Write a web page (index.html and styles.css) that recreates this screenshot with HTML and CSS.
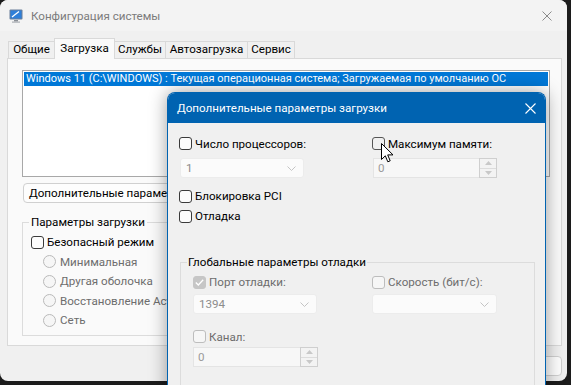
FILE: index.html
```html
<!DOCTYPE html>
<html lang="ru">
<head>
    <meta charset="UTF-8">
    <title>Конфигурация системы</title>
    <link rel="stylesheet" href="styles.css">
</head>
<body>
    <div class="desktop">
        <!-- main msconfig window -->
        <div class="window main-window">
            <div class="titlebar">
                <svg class="app-icon" width="14" height="14" viewBox="0 0 14 14">
                    <rect x="0.5" y="0.5" width="13" height="10" rx="1" fill="#6b7f9a"/>
                    <rect x="1.5" y="1.5" width="11" height="8" fill="#2f7fd8"/>
                    <path d="M3 8 L10 2.5" stroke="#ffffff" stroke-width="1.3"/>
                    <rect x="5" y="11" width="4" height="1.5" fill="#8a8f96"/>
                    <rect x="3" y="12.5" width="8" height="1.2" fill="#a9adb3"/>
                </svg>
                <span class="title">Конфигурация системы</span>
                <span class="close">
                    <svg width="10" height="10" viewBox="0 0 10 10"><path d="M0.5 0.5 L9.5 9.5 M9.5 0.5 L0.5 9.5" stroke="#8a8a8a" stroke-width="1"/></svg>
                </span>
            </div>
            <div class="client">
                <div class="tabs">
                    <div class="tab tab-general">Общие</div>
                    <div class="tab active">Загрузка</div>
                    <div class="tab tab-services">Службы</div>
                    <div class="tab tab-startup">Автозагрузка</div>
                    <div class="tab tab-tools">Сервис</div>
                </div>
                <div class="tab-panel">
                    <div class="os-list">
                        <div class="os-item selected">Windows 11 (C:\WINDOWS) : Текущая операционная система; Загружаемая по умолчанию ОС</div>
                    </div>
                    <div class="btn-row">
                        <button class="btn">Дополнительные параметры...</button>
                    </div>
                    <fieldset class="group boot-group">
                        <legend>Параметры загрузки</legend>
                        <label class="check"><span class="box"></span>Безопасный режим</label>
                        <label class="radio"><span class="dot"></span>Минимальная</label>
                        <label class="radio"><span class="dot"></span>Другая оболочка</label>
                        <label class="radio"><span class="dot"></span>Восстановление Active Directory</label>
                        <label class="radio"><span class="dot"></span>Сеть</label>
                    </fieldset>
                </div>
                <div class="footer">
                    <button class="btn">Отмена</button>
                </div>
            </div>
        </div>

        <!-- advanced boot options dialog -->
        <div class="window dialog">
            <div class="dialog-title">
                <span class="title">Дополнительные параметры загрузки</span>
                <span class="close">
                    <svg width="11" height="11" viewBox="0 0 11 11"><path d="M0.5 0.5 L10.5 10.5 M10.5 0.5 L0.5 10.5" stroke="#ffffff" stroke-width="1.1"/></svg>
                </span>
            </div>
            <div class="dialog-body">
                <div class="two-col top-cols">
                    <div class="col">
                        <label class="check"><span class="box"></span>Число процессоров:</label>
                        <div class="combo"><span>1</span><svg width="9" height="5" viewBox="0 0 9 5"><path d="M0.5 0.5 L4.5 4.5 L8.5 0.5" fill="none" stroke="#c4c4c4"/></svg></div>
                    </div>
                    <div class="col">
                        <label class="check"><span class="box hover"></span>Максимум памяти:</label>
                        <div class="spin">
                            <span class="spin-field">0</span>
                            <span class="spin-btns">
                                <span class="spin-btn"><svg width="7" height="4" viewBox="0 0 7 4"><path d="M0 4 L3.5 0 L7 4Z" fill="#c8c8c8"/></svg></span>
                                <span class="spin-btn"><svg width="7" height="4" viewBox="0 0 7 4"><path d="M0 0 L3.5 4 L7 0Z" fill="#c8c8c8"/></svg></span>
                            </span>
                        </div>
                    </div>
                </div>
                <label class="check pci"><span class="box"></span>Блокировка PCI</label>
                <label class="check"><span class="box"></span>Отладка</label>

                <fieldset class="group debug-group">
                    <legend>Глобальные параметры отладки</legend>
                    <div class="two-col debug-cols">
                        <div class="col">
                            <label class="check disabled"><span class="box checked">
                                <svg width="9" height="7" viewBox="0 0 9 7"><path d="M0.8 3.5 L3.3 6 L8.2 0.8" fill="none" stroke="#ffffff" stroke-width="1.3"/></svg>
                            </span>Порт отладки:</label>
                            <div class="combo"><span>1394</span><svg width="9" height="5" viewBox="0 0 9 5"><path d="M0.5 0.5 L4.5 4.5 L8.5 0.5" fill="none" stroke="#c4c4c4"/></svg></div>
                        </div>
                        <div class="col">
                            <label class="check disabled"><span class="box"></span>Скорость (бит/с):</label>
                            <div class="combo"><span></span><svg width="9" height="5" viewBox="0 0 9 5"><path d="M0.5 0.5 L4.5 4.5 L8.5 0.5" fill="none" stroke="#c4c4c4"/></svg></div>
                        </div>
                    </div>
                    <label class="check disabled channel"><span class="box"></span>Канал:</label>
                    <div class="spin narrow">
                        <span class="spin-field">0</span>
                        <span class="spin-btns">
                            <span class="spin-btn"><svg width="7" height="4" viewBox="0 0 7 4"><path d="M0 4 L3.5 0 L7 4Z" fill="#c8c8c8"/></svg></span>
                            <span class="spin-btn"><svg width="7" height="4" viewBox="0 0 7 4"><path d="M0 0 L3.5 4 L7 0Z" fill="#c8c8c8"/></svg></span>
                        </span>
                    </div>
                    <div class="usb-label">Имя целевого USB:</div>
                </fieldset>
            </div>
        </div>

        <svg class="cursor" width="13" height="21" viewBox="0 0 13 21">
            <path d="M0.5 0.5 L0.5 16.5 L4.3 12.8 L6.8 18.8 L9.2 17.8 L6.7 11.9 L12 11.9 Z" fill="#ffffff" stroke="#000000" stroke-width="1" stroke-linejoin="round"/>
        </svg>
    </div>
</body>
</html>
```

FILE: styles.css
```css
* {
    box-sizing: border-box;
}

body {
    margin: 0;
    background: #1c1c1c;
    font-family: Roboto, "Noto Sans", sans-serif;
    font-size: 11.6px;
    color: #000000;
}

.desktop {
    position: relative;
    width: 571px;
    height: 385px;
    overflow: hidden;
}

.window {
    position: absolute;
}

/* main window */
.main-window {
    left: 0;
    top: 0;
    width: 567px;
    height: 381px;
    background: #f0f0f0;
    border-radius: 8px;
    overflow: hidden;
    display: flex;
    flex-direction: column;
}

.titlebar {
    height: 31px;
    background: #f3f3f3;
    display: flex;
    align-items: center;
    padding-left: 9px;
}

.app-icon {
    flex: none;
}

.titlebar .title {
    margin-left: 8px;
    color: #7b7b7b;
    flex: 1;
}

.titlebar .close {
    width: 40px;
    height: 31px;
    display: flex;
    align-items: center;
    justify-content: center;
}

.client {
    flex: 1;
    padding: 7px 5px 0 7px;
}

.tabs {
    display: flex;
    align-items: flex-end;
    height: 20px;
    padding-left: 1px;
}

.tab {
    height: 17px;
    line-height: 15px;
    padding: 0 3px;
    text-align: center;
    border: 1px solid #d9d9d9;
    border-bottom: none;
    margin-right: -1px;
    background: #f0f0f0;
    white-space: nowrap;
}

.tab-general { width: 47px; }
.tab-services { width: 52px; }
.tab-startup { width: 83px; }
.tab-tools { width: 48px; }

.tab.active {
    width: 61px;
    height: 21px;
    line-height: 18px;
    margin-bottom: -1px;
    background: #fafafa;
    position: relative;
    z-index: 1;
}

.tab-panel {
    height: 288px;
    border: 1px solid #d9d9d9;
    background: #fafafa;
    padding: 11px 11px 0 14px;
}

.os-list {
    height: 107px;
    border: 1px solid #a8a8a8;
    background: #ffffff;
    padding: 1px;
}

.os-item {
    height: 14px;
    line-height: 13px;
    padding-left: 2px;
    font-size: 11px;
    white-space: nowrap;
    overflow: hidden;
}

.os-item.selected {
    background: #0078d7;
    color: #ffffff;
}

.btn-row {
    margin-top: 6px;
    padding-left: 1px;
}

.btn {
    height: 20px;
    padding: 0 5px;
    border: 1px solid #d0d0d0;
    border-radius: 4px;
    background: #fdfdfd;
    font-family: inherit;
    font-size: 11.6px;
    color: #000000;
}

.group {
    margin: 0;
    border: 1px solid #dcdcdc;
    padding: 2px 8px 5px 8px;
}

.group legend {
    padding: 0 2px;
    margin-left: -2px;
    line-height: 16px;
}

.boot-group {
    margin-top: 11px;
    width: 300px;
}

.check, .radio {
    display: flex;
    align-items: center;
    gap: 3px;
    height: 20px;
    white-space: nowrap;
}

.radio {
    height: 19.5px;
    padding-left: 12px;
    gap: 4px;
    color: #6d6d6d;
}

.box {
    width: 13px;
    height: 13px;
    flex: none;
    border: 1px solid #3a3a3a;
    border-radius: 3px;
    background: #fcfcfc;
    display: flex;
    align-items: center;
    justify-content: center;
}

.box.hover {
    background: #f0f0f0;
    border-color: #555555;
}

.dot {
    width: 13px;
    height: 13px;
    flex: none;
    border: 1px solid #bababa;
    border-radius: 50%;
    background: #f6f6f6;
}

.check.disabled {
    color: #6d6d6d;
}

.check.disabled .box {
    border-color: #bdbdbd;
    background: #f6f6f6;
}

.check.disabled .box.checked {
    background: #c6c6c6;
    border-color: #c6c6c6;
}

.footer {
    display: flex;
    justify-content: flex-end;
    padding-top: 10px;
}

.footer .btn {
    width: 90px;
}

/* dialog */
.dialog {
    left: 167px;
    top: 92px;
    width: 379px;
    height: 310px;
    background: #f0f0f0;
    border: 1px solid #0063b1;
    border-bottom: none;
    border-radius: 8px 8px 0 0;
    box-shadow: 0 0 18px rgba(0, 0, 0, 0.38);
}

.dialog-title {
    height: 30px;
    background: #0063b1;
    border-radius: 7px 7px 0 0;
    display: flex;
    align-items: center;
    padding-left: 9px;
    color: #ffffff;
}

.dialog-title .title {
    flex: 1;
}

.dialog-title .close {
    width: 30px;
    height: 30px;
    display: flex;
    align-items: center;
    justify-content: center;
}

.dialog-body {
    padding: 12px 11px 0 11px;
}

.two-col {
    display: grid;
}

.top-cols {
    grid-template-columns: 125px 125px;
    column-gap: 68px;
}

.top-cols .check {
    height: 17px;
}

.top-cols .combo, .top-cols .spin {
    margin-top: 6px;
}

.combo {
    height: 20px;
    border: 1px solid #ececec;
    border-radius: 3px;
    background: #fbfbfb;
    display: flex;
    align-items: center;
    justify-content: space-between;
    padding: 0 7px 0 5px;
    color: #8c8c8c;
    margin-left: 1px;
}

.spin {
    height: 20px;
    display: flex;
    margin-left: 1px;
}

.spin-field {
    flex: 1;
    border: 1px solid #e4e4e4;
    border-right: none;
    background: #f7f7f7;
    color: #9a9a9a;
    line-height: 18px;
    padding-left: 4px;
}

.spin-btns {
    width: 18px;
    display: flex;
    flex-direction: column;
    border: 1px solid #cfcfcf;
    background: #f3f3f3;
}

.spin-btn {
    flex: 1;
    display: flex;
    align-items: center;
    justify-content: center;
}

.spin-btn + .spin-btn {
    border-top: 1px solid #dcdcdc;
}

.check.pci {
    margin-top: 8px;
}

.debug-group {
    margin: 28px 0 0 1px;
    width: 355px;
    padding: 4px 12px 0 12px;
    border-bottom: none;
    height: 200px;
}

.debug-group legend {
    margin-left: -6px;
    padding: 0 1px;
}

.debug-cols {
    grid-template-columns: 124px 125px;
    column-gap: 55px;
}

.debug-cols .check {
    height: 16px;
}

.debug-cols .combo {
    margin: 4px 0 0 0;
}

.check.channel {
    margin-top: 14px;
    height: 17px;
}

.spin.narrow {
    width: 125px;
    margin: 2px 0 0 0;
}

.usb-label {
    margin-top: 14px;
    line-height: 17px;
}

.cursor {
    position: absolute;
    left: 381px;
    top: 143px;
}
```
